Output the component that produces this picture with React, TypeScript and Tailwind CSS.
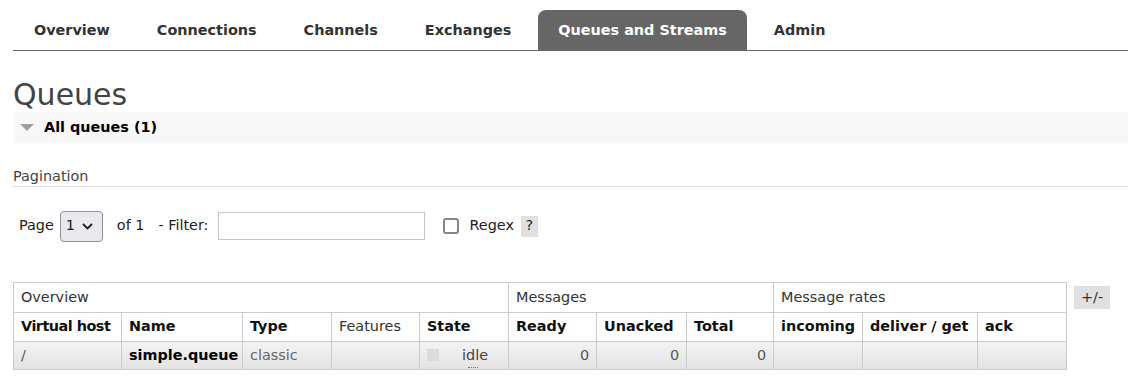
import React from "react";

const tabs = ["Overview", "Connections", "Channels", "Exchanges", "Queues and Streams", "Admin"];

function Triangle() {
  return (
    <svg width="14" height="8" viewBox="0 0 14 8" className="block">
      <polygon points="0,0 14,0 7,7" fill="#a0a0a0" />
    </svg>
  );
}

function Chevron() {
  return (
    <svg width="11" height="7" viewBox="0 0 11 7" className="block">
      <polyline points="1,1 5.5,5.5 10,1" fill="none" stroke="#222" strokeWidth="1.8" />
    </svg>
  );
}

export default function App() {
  const font = { fontFamily: '"DejaVu Sans", Verdana, sans-serif' };
  const th2 = "border border-[#cccccc] px-[7px] text-left font-bold text-[#111] h-[29px] whitespace-nowrap";
  const td = "border border-[#cccccc] px-[7px] h-[28px] whitespace-nowrap";
  return (
    <div className="w-[1128px] h-[381px] bg-white text-[14.4px] text-[#333] overflow-hidden" style={font}>
      {/* Nav */}
      <div className="ml-[13px] pt-[10px] border-b border-[#666666] flex gap-[7px] pl-px">
        {tabs.map((t) => (
          <div
            key={t}
            className={
              "h-[40px] px-5 flex items-center font-bold leading-none " +
              (t === "Queues and Streams"
                ? "bg-[#666666] text-white rounded-t-[8px]"
                : "text-[#333]")
            }
          >
            {t}
          </div>
        ))}
      </div>

      <div className="ml-[13px]">
        <h1 className="mt-[29px] text-[30px] leading-[30px] text-[#444]">Queues</h1>
        <div className="mt-[2px] h-[31px] bg-[#f8f8f8] flex items-center">
          <div className="ml-[7px] mr-[10px]">
            <Triangle />
          </div>
          <span className="font-bold text-black leading-[31px]">All queues (1)</span>
        </div>

        <div className="mt-[24px] leading-[18px] pb-px border-b border-[#dddddd] text-[#444]">Pagination</div>

        <div className="mt-[23px] h-[32px] flex items-center text-[#222]">
          <span className="ml-[6px]">Page</span>
          <div className="ml-[6px] w-[43px] h-[31px] rounded-[4px] border border-[#8f8f9d] bg-[#e9e9ed] flex items-center pl-[5px] gap-[7px]">
            <span>1</span>
            <Chevron />
          </div>
          <span className="ml-[14px]">of 1</span>
          <span className="ml-[14px]">- Filter:</span>
          <div className="ml-[10px] w-[207px] h-[28px] border border-[#c4c4c4] bg-white" />
          <div className="ml-[18px] w-[16px] h-[16px] rounded-[3px] border-2 border-[#858585] bg-white" />
          <span className="ml-[10px]">Regex</span>
          <span className="ml-[7px] w-[17px] h-[21px] bg-[#e0e0e0] flex items-center justify-center">?</span>
        </div>

        <div className="mt-[40px] flex items-start">
          <table className="w-[1053px] table-fixed border-collapse">
            <colgroup>
              <col style={{ width: 108 }} />
              <col style={{ width: 121 }} />
              <col style={{ width: 89 }} />
              <col style={{ width: 88 }} />
              <col style={{ width: 89 }} />
              <col style={{ width: 88 }} />
              <col style={{ width: 90 }} />
              <col style={{ width: 87 }} />
              <col style={{ width: 89 }} />
              <col style={{ width: 115 }} />
              <col style={{ width: 89 }} />
            </colgroup>
            <thead>
              <tr>
                <th colSpan={5} className="border border-[#cccccc] px-[7px] h-[30px] text-left font-normal text-[#333]">Overview</th>
                <th colSpan={3} className="border border-[#cccccc] px-[7px] h-[30px] text-left font-normal text-[#333]">Messages</th>
                <th colSpan={3} className="border border-[#cccccc] px-[7px] h-[30px] text-left font-normal text-[#333]">Message rates</th>
              </tr>
              <tr>
                <th className={th2 + " tracking-[-0.5px]"}>Virtual host</th>
                <th className={th2}>Name</th>
                <th className={th2}>Type</th>
                <th className="border border-[#cccccc] px-[7px] text-left font-normal text-[#333] h-[29px]">Features</th>
                <th className={th2}>State</th>
                <th className={th2}>Ready</th>
                <th className={th2}>Unacked</th>
                <th className={th2}>Total</th>
                <th className={th2}>incoming</th>
                <th className={th2}>deliver / get</th>
                <th className={th2}>ack</th>
              </tr>
            </thead>
            <tbody>
              <tr className="bg-[linear-gradient(#f3f3f3,#e3e3e3)]">
                <td className={td + " text-[#555]"}>/</td>
                <td className={td + " font-bold text-black"}>simple.queue</td>
                <td className={td + " text-[#666]"}>classic</td>
                <td className={td}></td>
                <td className={td}>
                  <div className="flex items-center">
                    <span className="w-[12px] h-[12px] bg-[#dcdcdc]" />
                    <span className="ml-[23px] relative text-[#444]">
                      idle
                      <span className="absolute left-[6px] w-[10px] bottom-[-2px] border-b border-dotted border-[#777]" />
                    </span>
                  </div>
                </td>
                <td className={td + " text-right text-[#555]"}>0</td>
                <td className={td + " text-right text-[#555]"}>0</td>
                <td className={td + " text-right text-[#555]"}>0</td>
                <td className={td}></td>
                <td className={td}></td>
                <td className={td}></td>
              </tr>
            </tbody>
          </table>
          <div className="ml-[7px] mt-[4px] w-[36px] h-[23px] bg-[#e0e0e0] flex items-center justify-center text-[#333]">+/-</div>
        </div>
      </div>
    </div>
  );
}
